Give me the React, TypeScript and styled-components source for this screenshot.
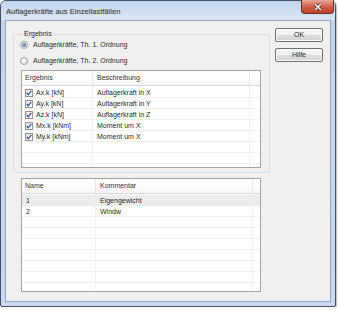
import React from "react";
import styled, { createGlobalStyle } from "styled-components";

const GlobalStyle = createGlobalStyle`
  body {
    margin: 0;
    background: #ffffff;
    font-family: "Liberation Sans", Arial, sans-serif;
  }
`;

//////// data ////////
const results = [
  { name: "Ax.k [kN]", desc: "Auflagerkraft in X" },
  { name: "Ay.k [kN]", desc: "Auflagerkraft in Y" },
  { name: "Az.k [kN]", desc: "Auflagerkraft in Z" },
  { name: "Mx.k [kNm]", desc: "Moment um X" },
  { name: "My.k [kNm]", desc: "Moment um X" },
];

const loadCases = [
  { name: "1", comment: "Eigengewicht" },
  { name: "2", comment: "Windw" },
];

function App() {
  return (
    <>
      <GlobalStyle />
      <Window>
        <TitleBar>
          <Title>Auflagerkräfte aus Einzellastfällen</Title>
          <CloseButton>
            <svg width="10" height="8" viewBox="0 0 10 8">
              <path d="M2 1 L8 7 M8 1 L2 7" stroke="#5a2a22" strokeWidth="3" />
              <path d="M2 1 L8 7 M8 1 L2 7" stroke="#ffffff" strokeWidth="1.5" />
            </svg>
          </CloseButton>
        </TitleBar>

        <Client>
          <LeftColumn>
            <GroupBox>
              <GroupLabel>Ergebnis</GroupLabel>
              <RadioRow>
                <Radio $checked />
                <RadioText>Auflagerkräfte, Th. 1. Ordnung</RadioText>
              </RadioRow>
              <RadioRow $gap={5}>
                <Radio />
                <RadioText>Auflagerkräfte, Th. 2. Ordnung</RadioText>
              </RadioRow>

              <ListView $height={98} $top={4}>
                <Header>
                  <HeadCell $width={71}>Ergebnis</HeadCell>
                  <HeadCell $width={157}>Beschreibung</HeadCell>
                </Header>
                <Body $split1={71} $split2={228}>
                  {results.map((r) => (
                    <Row key={r.name}>
                      <Cell $width={71}>
                        <CheckBox>
                          <svg width="6" height="6" viewBox="0 0 6 6">
                            <path
                              d="M0.8 3 L2.3 4.8 L5.3 0.8"
                              stroke="#34508a"
                              strokeWidth="1.2"
                              fill="none"
                            />
                          </svg>
                        </CheckBox>
                        <CellText>{r.name}</CellText>
                      </Cell>
                      <Cell $width={157}>
                        <CellText $pad={4}>{r.desc}</CellText>
                      </Cell>
                    </Row>
                  ))}
                </Body>
              </ListView>
            </GroupBox>

            <ListView $height={114} $top={5} $left={8}>
              <Header>
                <HeadCell $width={74}>Name</HeadCell>
                <HeadCell $width={157}>Kommentar</HeadCell>
              </Header>
              <Body $split1={74} $split2={231}>
                {loadCases.map((c, i) => (
                  <Row key={c.name} $selected={i === 0}>
                    <Cell $width={74}>
                      <CellText $pad={4}>{c.name}</CellText>
                    </Cell>
                    <Cell $width={157}>
                      <CellText $pad={4}>{c.comment}</CellText>
                    </Cell>
                  </Row>
                ))}
              </Body>
            </ListView>
          </LeftColumn>

          <ButtonColumn>
            <DialogButton>OK</DialogButton>
            <DialogButton>Hilfe</DialogButton>
          </ButtonColumn>
        </Client>
      </Window>
    </>
  );
}

/////// window frame ///////
const Window = styled.div`
  box-sizing: border-box;
  width: 336px;
  height: 307px;
  border: 1px solid #44536a;
  border-radius: 6px 6px 2px 2px;
  background: linear-gradient(#c3d5ec, #cad8f0);
  padding: 0 4px 4px 4px;
  display: flex;
  flex-direction: column;
  box-shadow: 1px 1px 1px rgba(0, 0, 0, 0.25);
`;

const TitleBar = styled.div`
  height: 19px;
  margin: 0 -4px;
  padding: 0 1px 0 5px;
  display: flex;
  align-items: flex-start;
  justify-content: space-between;
  background: linear-gradient(#c2d4ec, #dbe6f4);
  border-radius: 5px 5px 0 0;
`;

const Title = styled.div`
  font-size: 7.6px;
  line-height: 21px;
  color: #262626;
`;

const CloseButton = styled.div`
  width: 33px;
  height: 14px;
  margin-top: -1px;
  box-sizing: border-box;
  border: 1px solid #6e2f26;
  border-top: none;
  border-radius: 0 0 4px 4px;
  background: linear-gradient(#e9a897, #cf5a45 55%, #c0412d);
  display: flex;
  align-items: center;
  justify-content: center;
`;

const Client = styled.div`
  flex: 1;
  display: flex;
  background: #f0f0f0;
  border: 1px solid #93a6c3;
  padding-left: 7px;
`;

const LeftColumn = styled.div`
  display: flex;
  flex-direction: column;
  padding-top: 13px;
`;

///////// group box ////////
const GroupBox = styled.div`
  width: 257px;
  box-sizing: border-box;
  border: 1px solid #d6dde2;
  border-radius: 2px;
  padding: 0 0 4px 6px;
  display: flex;
  flex-direction: column;
`;

const GroupLabel = styled.span`
  align-self: flex-start;
  margin: -6px 0 0 3px;
  padding: 0 1px;
  background: #f0f0f0;
  font-size: 7px;
  line-height: 9px;
  color: #2a2a2a;
`;

const RadioRow = styled.div<{ $gap?: number }>`
  display: flex;
  align-items: center;
  height: 11px;
  margin-top: ${(p) => p.$gap ?? 1}px;
`;

const Radio = styled.span<{ $checked?: boolean }>`
  width: 8px;
  height: 8px;
  box-sizing: border-box;
  border-radius: 50%;
  border: 1px solid #a0a0a0;
  background: radial-gradient(circle at 40% 40%, #ffffff, #dcdcdc);
  display: flex;
  align-items: center;
  justify-content: center;
  &::after {
    content: "";
    width: 4px;
    height: 4px;
    border-radius: 50%;
    background: ${(p) =>
      p.$checked ? "radial-gradient(circle at 40% 40%, #8aa8c8, #3a5576)" : "transparent"};
  }
`;

const RadioText = styled.span`
  margin-left: 5px;
  font-size: 7px;
  color: #2a2a2a;
`;

////////// list views //////////
const ListView = styled.div<{ $height: number; $top: number; $left?: number }>`
  width: 240px;
  height: ${(p) => p.$height}px;
  margin-top: ${(p) => p.$top}px;
  margin-left: ${(p) => p.$left ?? 1}px;
  box-sizing: border-box;
  border: 1px solid #a3a3a3;
  background: #ffffff;
  display: flex;
  flex-direction: column;
  overflow: hidden;
`;

const Header = styled.div`
  height: 14px;
  flex-shrink: 0;
  display: flex;
  border-bottom: 1px solid #dadada;
  background: linear-gradient(#ffffff 40%, #f4f5f7);
`;

const HeadCell = styled.div<{ $width: number }>`
  width: ${(p) => p.$width}px;
  box-sizing: border-box;
  padding-left: 3px;
  border-right: 1px solid #e6e6e6;
  font-size: 7px;
  line-height: 14px;
  color: #333;
  & + & {
    padding-left: 4px;
  }
`;

const Body = styled.div<{ $split1: number; $split2: number }>`
  flex: 1;
  padding-top: 1px;
  background:
    linear-gradient(90deg, transparent ${(p) => p.$split1 - 1}px, #f2f2f2 ${(p) => p.$split1 - 1}px, #f2f2f2 ${(p) => p.$split1}px, transparent ${(p) => p.$split1}px),
    linear-gradient(90deg, transparent ${(p) => p.$split2 - 1}px, #f0f0f0 ${(p) => p.$split2 - 1}px, #f0f0f0 ${(p) => p.$split2}px, transparent ${(p) => p.$split2}px),
    repeating-linear-gradient(#ffffff 0, #ffffff 10px, #f0f0f0 10px, #f0f0f0 11px);
  background-position: 0 1px;
`;

const Row = styled.div<{ $selected?: boolean }>`
  height: 11px;
  display: flex;
  align-items: center;
  background: ${(p) => (p.$selected ? "#ececec" : "transparent")};
`;

const Cell = styled.div<{ $width: number }>`
  width: ${(p) => p.$width}px;
  display: flex;
  align-items: center;
`;

const CellText = styled.span<{ $pad?: number }>`
  margin-left: ${(p) => p.$pad ?? 3}px;
  font-size: 7px;
  color: #2a2a2a;
  white-space: nowrap;
`;

const CheckBox = styled.span`
  margin-left: 3px;
  width: 8px;
  height: 8px;
  box-sizing: border-box;
  border: 1px solid #949494;
  background: linear-gradient(135deg, #e2e2e2, #ffffff);
  display: flex;
  align-items: center;
  justify-content: center;
`;

///////// buttons /////////
const ButtonColumn = styled.div`
  display: flex;
  flex-direction: column;
  gap: 6px;
  margin-left: 5px;
  padding-top: 7px;
`;

const DialogButton = styled.div`
  width: 48px;
  height: 14px;
  box-sizing: border-box;
  border: 1px solid #707070;
  border-radius: 2px;
  background: linear-gradient(#f4f4f4 45%, #dedede 50%, #d3d3d3);
  box-shadow: inset 0 0 0 1px #fbfbfb;
  font-size: 7px;
  line-height: 12px;
  text-align: center;
  color: #262626;
`;

export default App;
